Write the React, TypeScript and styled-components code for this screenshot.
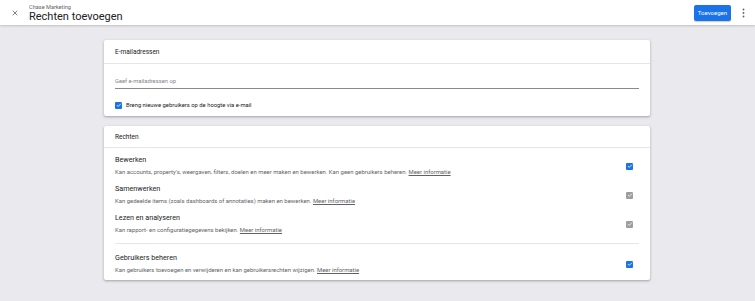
import {FC} from "react";
import styled, {createGlobalStyle} from 'styled-components';

const GlobalStyle = createGlobalStyle`
  html, body {
    margin: 0;
    padding: 0;
    background: #e9e9ee;
    font-family: Roboto, 'Liberation Sans', Arial, sans-serif;
    color: #202124;
  }
`;

const Page = styled.div`
  width: 755px;
  height: 301px;
  display: flex;
  flex-direction: column;
  overflow: hidden;
`;

const Header = styled.header`
  height: 25px;
  background: #fff;
  display: flex;
  align-items: center;
  padding: 0 8px 0 8px;
  box-shadow: 0 1px 2px rgba(0, 0, 0, 0.18);
  flex-shrink: 0;
`;

const CloseButton = styled.div`
  width: 12px;
  height: 12px;
  display: flex;
  align-items: center;
  justify-content: center;
  margin-left: 1px;
  margin-right: 8px;
`;

const TitleBlock = styled.div`
  display: flex;
  flex-direction: column;
  flex: 1;
`;

const SubTitle = styled.div`
  font-size: 5.6px;
  color: #5f6368;
  line-height: 6px;
  margin-top: 1px;
`;

const Title = styled.div`
  font-size: 11px;
  line-height: 13px;
  color: #202124;
`;

const PrimaryButton = styled.button`
  height: 16px;
  padding: 0 4px;
  border: none;
  border-radius: 2px;
  background: #1a73e8;
  color: #fff;
  font-family: inherit;
  font-size: 6px;
  margin-right: 8px;
  box-shadow: 0 1px 1px rgba(0, 0, 0, 0.2);
`;

const MoreButton = styled.div`
  width: 8px;
  display: flex;
  justify-content: center;
`;

const Content = styled.main`
  display: flex;
  flex-direction: column;
  gap: 10px;
  padding: 15px 0 0 104px;
`;

const Card = styled.section`
  width: 546px;
  background: #fff;
  border-radius: 2px;
  box-shadow: 0 1px 2px rgba(0, 0, 0, 0.2), 0 1px 3px 1px rgba(0, 0, 0, 0.08);
`;

const CardTitle = styled.div<{$compact?: boolean}>`
  height: ${p => (p.$compact ? '21px' : '23px')};
  display: flex;
  align-items: center;
  padding: 0 11px;
  font-size: 6.5px;
  color: #202124;
  border-bottom: 1px solid #e6e6e6;
`;

const CardBody = styled.div`
  padding: 7px 11px 7px 11px;
`;

const Input = styled.div`
  height: 15px;
  border-bottom: 1px solid #8a8a8a;
  display: flex;
  align-items: center;
  padding-top: 2px;
  font-size: 5.8px;
  color: #80868b;
`;

const CheckRow = styled.label`
  display: flex;
  align-items: center;
  gap: 4px;
  height: 8px;
  margin-top: 12px;
  font-size: 5.85px;
  color: #202124;
`;

const Box = styled.span<{$muted?: boolean}>`
  width: 7px;
  height: 7px;
  border-radius: 1px;
  background: ${p => (p.$muted ? '#9e9e9e' : '#1a73e8')};
  display: flex;
  align-items: center;
  justify-content: center;
  flex-shrink: 0;
`;

const PermList = styled.div`
  padding: 0 11px;
`;

const PermGroup = styled.div<{$divider?: boolean}>`
  padding: ${p => (p.$divider ? '4px 0 3px' : '2px 0 6px')};
  border-top: ${p => (p.$divider ? '1px solid #e6e6e6' : 'none')};
`;

const PermRow = styled.div`
  display: flex;
  align-items: center;
  height: 29px;
`;

const PermText = styled.div`
  flex: 1;
`;

const PermName = styled.div`
  font-size: 7.2px;
  line-height: 9px;
  color: #202124;
`;

const PermDesc = styled.div`
  font-size: 5.95px;
  line-height: 7px;
  color: #5f6368;
  margin-top: 4px;

  a {
    color: #5f6368;
    text-decoration: underline;
  }
`;

const PermCheck = styled.div`
  width: 7px;
  margin-right: 6px;
  padding-top: 3px;
`;

const Check: FC<{muted?: boolean}> = ({muted}) => (
    <Box $muted={muted}>
        <svg width="6" height="6" viewBox="0 0 24 24">
            <path d="M4 12.5l5 5L20 6.5" fill="none" stroke="#fff" strokeWidth="3.2"/>
        </svg>
    </Box>
);

const perms = [
    {
        name: 'Bewerken',
        desc: 'Kan accounts, property\'s, weergaven, filters, doelen en meer maken en bewerken. Kan geen gebruikers beheren.',
        muted: false,
    },
    {
        name: 'Samenwerken',
        desc: 'Kan gedeelde items (zoals dashboards of annotaties) maken en bewerken.',
        muted: true,
    },
    {
        name: 'Lezen en analyseren',
        desc: 'Kan rapport- en configuratiegegevens bekijken.',
        muted: true,
    },
];

const Permission: FC<{name: string; desc: string; muted?: boolean}> = ({name, desc, muted}) => (
    <PermRow>
        <PermText>
            <PermName>{name}</PermName>
            <PermDesc>{desc} <a>Meer informatie</a></PermDesc>
        </PermText>
        <PermCheck><Check muted={muted}/></PermCheck>
    </PermRow>
);

const App: FC = () => {
    return (
        <Page>
            <GlobalStyle/>
            <Header>
                <CloseButton>
                    <svg width="8" height="8" viewBox="0 0 24 24">
                        <path d="M5 5l14 14M19 5L5 19" stroke="#5f6368" strokeWidth="2.4"/>
                    </svg>
                </CloseButton>
                <TitleBlock>
                    <SubTitle>Chase Marketing</SubTitle>
                    <Title>Rechten toevoegen</Title>
                </TitleBlock>
                <PrimaryButton>Toevoegen</PrimaryButton>
                <MoreButton>
                    <svg width="3" height="10" viewBox="0 0 3 10">
                        <circle cx="1.5" cy="1.5" r="0.9" fill="#5f6368"/>
                        <circle cx="1.5" cy="5" r="0.9" fill="#5f6368"/>
                        <circle cx="1.5" cy="8.5" r="0.9" fill="#5f6368"/>
                    </svg>
                </MoreButton>
            </Header>

            <Content>
                <Card>
                    <CardTitle>E-mailadressen</CardTitle>
                    <CardBody>
                        <Input>Geef e-mailadressen op</Input>
                        <CheckRow>
                            <Check/>
                            Breng nieuwe gebruikers op de hoogte via e-mail
                        </CheckRow>
                    </CardBody>
                </Card>

                <Card>
                    <CardTitle $compact>Rechten</CardTitle>
                    <PermList>
                        <PermGroup>
                            {perms.map(p => (
                                <Permission key={p.name} name={p.name} desc={p.desc} muted={p.muted}/>
                            ))}
                        </PermGroup>
                        <PermGroup $divider>
                            <Permission
                                name="Gebruikers beheren"
                                desc="Kan gebruikers toevoegen en verwijderen en kan gebruikersrechten wijzigen."
                            />
                        </PermGroup>
                    </PermList>
                </Card>
            </Content>
        </Page>
    )
}

export default App;
